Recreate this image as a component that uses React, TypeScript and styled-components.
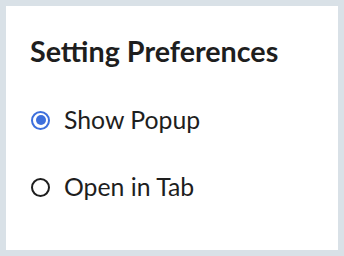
import * as React from "react";
import styled, { createGlobalStyle } from "styled-components";

const GlobalStyle = createGlobalStyle`
  html, body {
    margin: 0;
    padding: 0;
    background: #d9e1e7;
  }
  body {
    font-family: Lato, "Open Sans", sans-serif;
  }
`;

const Frame = styled.div`
  box-sizing: border-box;
  width: 344px;
  height: 256px;
  padding: 6px;
  background: #d9e1e7;
`;

const Card = styled.div`
  box-sizing: border-box;
  height: 100%;
  background: #ffffff;
  padding: 28px 24px 0 24px;
`;

const Title = styled.h2`
  margin: 0 0 38px 0;
  font-size: 28.7px;
  font-weight: 700;
  color: #1e1e1e;
  line-height: 34px;
`;

const Options = styled.div`
  display: flex;
  flex-direction: column;
  gap: 39px;
`;

const Option = styled.label`
  display: flex;
  align-items: center;
  gap: 14px;
  font-size: 24.8px;
  color: #1e1e1e;
  line-height: 28px;
  cursor: pointer;
`;

const Dot = styled.span<{ $checked: boolean }>`
  box-sizing: border-box;
  flex: none;
  width: 19px;
  height: 19px;
  margin-left: 1px;
  border-radius: 50%;
  border: 2px solid ${p => (p.$checked ? "#3d6fdc" : "#1e1e1e")};
  display: flex;
  align-items: center;
  justify-content: center;
  &::after {
    content: "";
    display: ${p => (p.$checked ? "block" : "none")};
    width: 10px;
    height: 10px;
    border-radius: 50%;
    background: #3d6fdc;
  }
`;

const choices = [
  { id: "popup", label: "Show Popup" },
  { id: "tab", label: "Open in Tab" }
];

const App: React.FC = () => {
  const [selected, setSelected] = React.useState("popup");
  return (
    <>
      <GlobalStyle />
      <Frame>
        <Card>
          <Title>Setting Preferences</Title>
          <Options>
            {choices.map(c => (
              <Option key={c.id} onClick={() => setSelected(c.id)}>
                <Dot $checked={selected === c.id} />
                {c.label}
              </Option>
            ))}
          </Options>
        </Card>
      </Frame>
    </>
  );
};

export default App;
